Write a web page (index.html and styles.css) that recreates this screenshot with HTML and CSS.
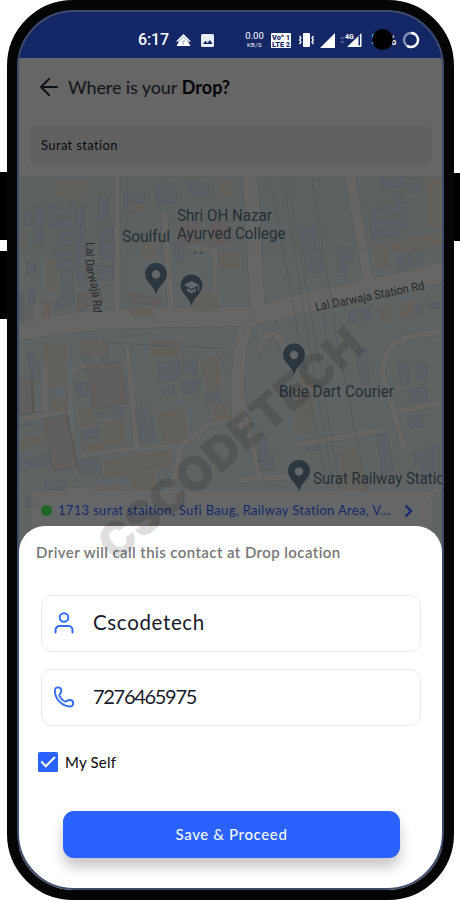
FILE: index.html
```html
<!DOCTYPE html>
<html lang="en">
<head>
<meta charset="utf-8">
<title>Drop location</title>
<link rel="stylesheet" href="styles.css">
</head>
<body>
<div class="stage">
<i class="key key-up"></i><i class="key key-down"></i><i class="key key-power"></i>
<main class="phone">
<header class="status">
  <span class="clock">6:17</span>
  <svg class="tri" width="15" height="12" viewBox="0 0 15 12"><path d="M7.500 0 15 7.500H12L14.500 12H.5L3 7.500H0Z" fill="#fff"/><path d="M2 8 7.500 3 13 8M7 11V7h2" fill="none" stroke="#8792b5" stroke-width=".9"/></svg>
  <svg class="photo" width="13" height="13" viewBox="0 0 13 13"><rect width="13" height="13" rx="1.500" fill="#e9ebf2"/><path d="m2 10 2.500-3.300 2 2.200L9 6l2.500 4Z" fill="#132766"/></svg>
  <span class="rate"><b>0.00</b><small>KB/S</small></span>
  <svg class="volte" width="20" height="15" viewBox="0 0 20 15"><rect width="20" height="15" rx="1" fill="#fff"/><text x="1" y="6.800" textLength="12" lengthAdjust="spacingAndGlyphs">Vo^</text><text x="15" y="6.800">1</text><text x="1" y="13.600" textLength="12" lengthAdjust="spacingAndGlyphs">LTE</text><text x="15" y="13.600">2</text></svg>
  <svg class="vibe" width="15" height="14" viewBox="0 0 15 14"><rect x="4" y="0" width="7" height="14" rx="1" fill="#fff"/><path d="m.5 3 1.500 2-1.500 2L2 9 .5 11M14.500 3 13 5l1.500 2L13 9l1.500 2" fill="none" stroke="#fff" stroke-width="1.300"/></svg>
  <svg class="sig" width="15" height="15" viewBox="0 0 15 15"><path d="M15 0v15H0Z" fill="#fff"/></svg>
  <svg class="sig2" width="22" height="16" viewBox="0 0 22 16"><path d="m0 7 2.300-3L4.500 7ZM0 9l2.300 3L4.500 9Z" fill="#53628e"/><path d="M21.500 1v14H7Z" fill="#fff"/><path d="M18.500 4v9.500h1.500V3Z" fill="#132766"/><path d="M5 0h10v5L12 7H5Z" fill="#132766"/><text x="5" y="6.500" class="g4">4G</text></svg>
  <span class="batt">58%<i></i></span>
  <svg class="ring" width="18" height="18" viewBox="0 0 18 18" fill="none" stroke-width="2.300"><circle cx="9" cy="9" r="7" stroke="#8793b5"/><path d="M9 2a7 7 0 1 1-4 12.700" stroke="#fff"/></svg>
</header>
<section class="top">
  <svg width="18" height="18" viewBox="0 0 18 18" fill="none" stroke="#0c0f18" stroke-width="1.900" stroke-linecap="round" stroke-linejoin="round"><path d="M17 9H1M9 1 1 9l8 8"/></svg>
  <h1><span class="lead">Where is your</span> <b>Drop?</b></h1>
</section>
<div class="search">Surat station</div>
<section class="mapbox">
<svg class="map" width="424" height="380" viewBox="19 176 424 380">
<rect x="19" y="176" width="424" height="380" fill="#5f6363"/>
<g class="roads" fill="none" stroke="#595c5d" stroke-linejoin="round">
 <path d="M117 175V318" stroke-width="7"/><path d="M164 212 172 318" stroke-width="8"/><path d="M250 175 258 315" stroke-width="16"/><path d="M350 175 370 290" stroke-width="11"/>
 <path d="M15 331 C100 316 150 318 255 316 C320 296 380 290 450 270" stroke-width="21"/>
 <path d="M255 315 C240 330 240 350 238 380 V430" stroke-width="14"/><path d="M260 351 C267 328 277 328 286 352" stroke-width="8"/>
 <path d="M127 345 132 394 137 448" stroke-width="7"/><path d="M45 365V414M19 418 75 412M72 450 70 380 Q70 367 86 366H126" stroke-width="7"/>
 <path d="M82 456C120 449 150 446 180 448C200 430 215 415 248 418M180 450 172 491M239 385 260 480" stroke-width="6"/>
 <path d="M448 332C403 334 385 340 382 372L405 450M392 413 443 402M295 445 382 430M240 480 310 475" stroke-width="7"/>
 <path d="M19 500C45 490 70 491 105 488M424 520C420 500 430 490 448 487M37 293V330M215 252C205 247 190 247 187 248M215 248V316" stroke-width="6"/>
</g>
<g fill="none" stroke="#656666" stroke-linejoin="round">
 <path d="M117 175V318" stroke-width="5.500"/><path d="M164 212 172 318" stroke-width="6.500"/><path d="M250 175 258 315" stroke-width="14"/><path d="M350 175 370 290" stroke-width="9.500"/>
 <path d="M15 331 C100 316 150 318 255 316 C320 296 380 290 450 270" stroke-width="19.500"/>
 <path d="M255 315 C240 330 240 350 238 380 V430" stroke-width="12.500"/><path d="M260 351 C267 328 277 328 286 352" stroke-width="6.500"/>
 <path d="M127 345 132 394 137 448" stroke-width="5.500"/><path d="M45 365V414M19 418 75 412M72 450 70 380 Q70 367 86 366H126" stroke-width="5.500"/>
 <path d="M82 456C120 449 150 446 180 448C200 430 215 415 248 418M180 450 172 491M239 385 260 480" stroke-width="5"/>
 <path d="M448 332C403 334 385 340 382 372L405 450M392 413 443 402M295 445 382 430M240 480 310 475" stroke-width="5.500"/>
 <path d="M19 500C45 490 70 491 105 488M424 520C420 500 430 490 448 487M37 293V330M215 252C205 247 190 247 187 248M215 248V316" stroke-width="5"/>
</g>
<g class="blocks">
<g fill="#5b5e63" stroke="#55585d" stroke-width=".6">
 <path d="M24 209h9v17h-9zM36 208h9v18h-9zM48 205h8v22h-8zM56 208h18v9H56zM56 219h18v9H56zM57 230h17v7H57zM58 238h16v8H58zM54 250h19v8H54zM56 260h18v11H56zM76 208h8v17h-8zM76 226h9v9h-9zM77 238h8v26h-8zM77 266h9v19h-9zM98 197h10v23H98zM99 228h14v12H99zM100 242h14v18h-14zM98 266h15v14H98zM71 198h6v8h-6zM34 230l9-1v15h-8zM27 262h9v12h-9zM61 272h12v33H61zM28 289h8v14h-8zM57 297h7v12h-7zM19 293h5v30h-5z"/>
 <path d="M124 193l21-1v18h-12v1h-9zM154 185l22-2 1 19-20 3zM186 180l23 4-1 14-18-3zM174 243l9-1 1 18-8 2zM380 178l25-2 1 10-26 3zM407 184l14-1 1 8-14 2zM394 196l8-1 1 8-8 1zM369 210l37-7 1 10-37 6zM370 223l37-7 1 10-37 7zM371 232l28-6 1 9-28 5zM299 228l18-4 6 48-16 2zM336 249l15-3 2 14-6 1v15l-8 1zM396 258l7-2 4 13-7 2zM406 254l5-2 4 13-6 1zM417 253l5-1 2 11-6 1zM349 312l8-3 1 13-8 2zM361 310l8-2 2 12-8 2zM415 305l8-1v9h-8zM430 303l14-2v8h-14zM322 317l3-1 2 16-2 1z"/>
 <path d="M74 382h13v13l-10 1zM157 363l22-3 1 18-21 3zM183 361l14-2v16h-14zM162 388l11-2 1 7-10 2zM181 383l18-4v13l-15 2zM205 394l14-3 1 12-15 1zM134 410l14-4 8 34-15 5zM111 409l12-2v11h-10zM96 413l7-1 1 4-7 1zM80 431l18-3 1 9-16 3zM27 353l6-1 2 11 4 1v17l-7-3zM82 346h9v14h-9zM102 340h6v20h-6zM19 460 50 454v10l-31 7zM45 480l21 1v9H45zM79 460l22-2v15H79zM25 497h15v11H26zM356 351l11-2 2 36h-8zM397 363l10-1 3 22-9 1zM415 365l10-3 3 16-9 2zM408 390l18-4 2 15-17 2zM408 417l14-2v12l-12 1zM377 435l10-2 7 38-12 3zM414 452l25-8v34l-18-2v-12l-7 1zM259 440l8-1v22h-8zM258 455l16-1-1 16h-13zM307 448l14-2v4l-13 1zM19 425l16-3v3l-15 1z"/>
</g>
<g fill="#636059" stroke="#6c6557" stroke-width=".6">
 <path d="M57 181h30v13l-7 1v5H67v-3H57zM47 259h8l2 30H46zM28 314h7v9h-7zM19 237h6v9h-6zM42 300h9v18h-9zM142 243h14v14h-14zM130 307h24v9h-24zM132 210h14v-5h-14zM218 181h13v16h-10zM192 294h26v18h-26zM218 252h22v17h-22zM374 245l14-1 1 23-14 1zM392 243 442 231v14l-48 7zM426 178h17v47h-16zM379 307l11-1 2 14-11 2zM400 304l14-2v15l-14 1z"/>
 <path d="M43 344h24v15H43zM47 360l17-2 2 26-18 1zM49 401l18-2v13H50zM78 409l16-1 2 17-16 2zM84 445l19-4v10l-21 2zM104 423l20-3 1 24-20 2zM102 461l68-12 2 17-66 13zM129 474l26-3 2 20h-24zM80 341h27v12H82zM151 340h28v17h-27zM198 362l21-5 4 31-15 4zM157 413l27-6 4 32-25 7zM212 407l15-5 6 18-16 1zM19 440l27-6-1 11-26 5zM298 378l12-3 4 20-3 36-12 2-4-1zM340 450l16-2 12 44h-26zM94 488l31-1v5H94z"/>
</g>
<g fill="#615e5c" stroke="#575352" stroke-width=".7"><path d="m87 366 34-4 6 41-34 7ZM43 420l23-6 12 53-25 4ZM19 379l12-1 4 35-16 3Z"/><path d="m67 414 10 53M32 379l1 34" stroke-width="2"/><path d="m78 295 22-4 3 10-25 9ZM129 294l31 4-1 7-30-2Z"/></g>
<path d="M181 222h20v22h-20zM210 222h18v23h-18z" fill="#675b5a"/>
</g>
<g fill="none" stroke="#565959" stroke-width=".8"><path d="M270 176 308 390 328 491M283 176 310 350 335 491M287 176 319 360 340 491M312 176 337 340 367 491"/><path d="m276 204 4-1m5 27 4-1m0 44 4-1m24-92 4-1m10 76 4-1m-17 133 4-1m20-1 4-1" stroke-width="1"/><path d="M242 334q6-12 16-18M103 343 220 348 227 360M260 360q0-20 10-20t12 20"/></g>
<g class="place">
 <text x="177" y="221" textLength="95" lengthAdjust="spacingAndGlyphs">Shri OH Nazar</text><text x="177" y="239" textLength="108.500" lengthAdjust="spacingAndGlyphs">Ayurved College</text><text x="122" y="241.500" textLength="48" lengthAdjust="spacingAndGlyphs">Soulful</text>
 <text x="279" y="397" textLength="115" lengthAdjust="spacingAndGlyphs">Blue Dart Courier</text><text x="313" y="483.500" textLength="140" lengthAdjust="spacingAndGlyphs">Surat Railway Station</text>
</g>
<g class="road"><text transform="translate(316 311) rotate(-11.300)" textLength="111" lengthAdjust="spacingAndGlyphs">Lal Darwaja Station Rd</text>
<path id="laneway" d="M86 242C86 260 85 268 89 280C93 292 93 304 94 317" fill="none"/><text class="lane"><textPath href="#laneway" textLength="72" lengthAdjust="spacingAndGlyphs">Lal Darwaja Rd</textPath></text></g>
<path d="M194 253h2m4 0h2" stroke="#20292e" stroke-width="1.200"/>
<defs><path id="pin" d="M0 21C-1.500 12-11 8-11 0A11 11 0 0 1 11 0C11 8 1.500 12 0 21Z"/></defs>
<g fill="#2b363e"><use href="#pin" x="156" y="274"/><use href="#pin" x="191.500" y="285.500"/><use href="#pin" x="294" y="354.500"/><use href="#pin" x="299" y="471"/></g>
<g fill="#646667"><circle cx="156" cy="274.500" r="4.200"/><circle cx="294" cy="355" r="4.200"/><circle cx="299" cy="471.500" r="4.200"/><path d="m184 285 7.500-4 7.500 4-7.500 4ZM187 288l4.500 2.500 4.500-2.500v3l-4.500 2.500-4.500-2.500ZM198 285h1v6h-1Z"/></g>
</svg>
<div class="address"><i></i><span>1713 surat staition, Sufi Baug, Railway Station Area, V...</span><svg width="9" height="14" viewBox="0 0 9 14"><path d="m1.500 1.500 5.500 5.500-5.500 5.500" fill="none" stroke="#12296e" stroke-width="2.300"/></svg></div>
</section>
<section class="sheet">
  <h2><span>Driver will call this contact at Drop location</span></h2>
  <div class="field"><svg width="20" height="22" viewBox="0 0 20 22" fill="none" stroke="#346bf5" stroke-width="2" stroke-linecap="round"><circle cx="10" cy="5.500" r="4.300"/><path d="M1.500 20.500v-2.500a4 4 0 0 1 4-4h9a4 4 0 0 1 4 4v2.500"/></svg><span class="name">Cscodetech</span></div>
  <div class="field"><svg width="20" height="22" viewBox="0 0 20 22" fill="none" stroke="#346bf5" stroke-width="1.900" stroke-linejoin="round"><path d="M4 1.400C2 1.400.8 2.900.9 5.200C1.300 13 7.500 19.600 15 20.400C17.800 20.700 19.200 19.300 19.200 17.200C19.200 15.200 17.800 14 15.800 14C12.800 14 12.700 16.200 11 15.500C9 14.500 6.400 11.800 5.500 9.800C5 8 7.200 7.800 7.200 4.800C7.200 2.800 6 1.400 4 1.400Z"/></svg><span class="tel">7276465975</span></div>
  <label class="self"><svg width="20" height="20" viewBox="0 0 20 20"><rect width="20" height="20" rx="1.500" fill="#2962ff"/><path d="m3.300 9.500 4.500 4.700L17 5" fill="none" stroke="#fff" stroke-width="2.100"/></svg><span>My Self</span></label>
  <button><span>Save &amp; Proceed</span></button>
</section>
</main>
<svg class="mark" width="460" height="900" viewBox="0 0 460 900"><text transform="translate(115 563) rotate(-40.200)" textLength="330" lengthAdjust="spacingAndGlyphs">CSCODETECH</text></svg>
</div>
</body>
</html>
```
FILE: styles.css
```css
* { box-sizing: border-box; }
body { margin: 0; background: #fff; font-family: Lato, sans-serif; }
.stage { position: relative; width: 460px; height: 900px; overflow: hidden; padding-left: 7px; }
.phone { position: relative; width: 447px; height: 900px; border: 10px solid #050505; border-radius: 66px; background: #050505; display: flex; flex-direction: column; overflow: hidden; }
.phone::after { content: ""; position: absolute; inset: 0; border: 2px solid #3c4d6c; border-radius: 57px; pointer-events: none; box-shadow: 0 0 0 12px #050505; }
.key { position: absolute; background: #000; width: 8px; }
.key-up { left: 0; top: 172px; height: 68px; }
.key-down { left: 0; top: 251px; height: 68px; }
.key-power { right: 0; top: 173px; height: 68px; }
.status { height: 48px; flex: none; background: #132766; color: #fff; font-family: Roboto, sans-serif; display: flex; align-items: center; padding: 12px 0 0 121px; }
.clock { font-size: 16px; line-height: 18px; font-weight: 500; width: 30px; letter-spacing: -.1px; margin-top: -1px; }
.tri { margin-left: 8px; }
.photo { margin-left: 10px; }
.rate { width: 19px; margin-left: 31px; text-align: center; display: flex; flex-direction: column; align-items: center; }
.rate b { font-size: 9.500px; line-height: 11px; font-weight: 400; margin-top: -2px; }
.rate small { font-size: 6px; line-height: 7px; letter-spacing: .4px; }
.volte { margin-left: 7px; }
.volte text { font: 900 6.800px Roboto, sans-serif; fill: #132766; }
.vibe { margin-left: 8px; }
.sig { margin-left: 6px; }
.sig2 { margin-left: 5px; }
.g4 { font: 700 7px Roboto, sans-serif; fill: #fff; }
.batt { position: relative; margin-left: 9px; width: 28px; font-size: 14px; font-weight: 500; letter-spacing: -.3px; }
.batt i { position: absolute; width: 21px; height: 21px; border-radius: 50%; background: #000; left: 1px; top: -3px; }
.ring { margin-left: 3px; }
.top { height: 68px; flex: none; background: #666; display: flex; align-items: center; padding: 0 0 11px 23px; gap: 10px; }
h1 { margin: 0; font-size: 18px; font-weight: 500; color: #161821; white-space: nowrap; }
.lead { letter-spacing: -.12px; }
h1 b { color: #030305; font-weight: 700; }
.search { flex: none; height: 50px; padding: 0 0 0 24px; line-height: 38px; font-size: 13px; color: #090b10; letter-spacing: .36px; background: #666; position: relative; z-index: 0; }
.search::before { content: ""; position: absolute; z-index: -1; inset: 0 12px 12px 13px; border-radius: 6px; background: #606060; }
.mapbox { flex: none; height: 350px; padding: 0 2px; position: relative; }
.map { display: block; }
.roads { opacity: .7; }
.blocks { opacity: .72; }
.place { font: 400 16px Roboto, sans-serif; fill: #232f37; }
.road { font: 400 12px Roboto, sans-serif; fill: #25292b; }
.lane { font-size: 12px; }
.address { position: absolute; left: 14px; right: 12px; top: 315px; height: 40px; background: rgba(102,102,102,.82); display: flex; padding: 0 0 0 10px; color: #12296e; font-size: 13px; line-height: 39px; white-space: nowrap; border-radius: 8px; align-items: flex-start; }
.address i { width: 11px; height: 11px; border-radius: 50%; background: #1e6726; margin: 14px 6px 0 0; }
.address span { width: 346px; letter-spacing: .33px; }
.address svg { margin-top: 13px; }
.sheet { flex: 1; background: #fff; border-radius: 26px 26px 0 0; padding: 0 22px; display: flex; flex-direction: column; margin: 0 2px; position: relative; }
h2 { margin: 0 0 0 -5px; height: 68.500px; padding-top: 15.500px; font-size: 15px; line-height: 20px; font-weight: 600; color: #777; white-space: nowrap; letter-spacing: .42px; }
.field { width: 380px; height: 57px; border: 1px solid #e8ebf2; border-radius: 11px; margin-bottom: 17px; display: flex; align-items: center; padding-left: 12px; color: #171a29; font-size: 20px; flex: none; }
.field svg { width: 20px; margin-right: 19px; }
.field span { margin-top: -2px; }
.name { font-size: 20.500px; letter-spacing: .65px; }
.tel { font-size: 20px; letter-spacing: -1.300px; }
.self { display: flex; align-items: center; height: 20px; margin: 9.500px 0 0 -3px; font-size: 15px; color: #050505; gap: 7px; letter-spacing: .2px; }
button { border: 0; width: 337px; height: 47px; margin: 38.500px 0 0 22px; border-radius: 11px; background: #2962ff; color: #f5f8ff; font: 500 15px Lato, sans-serif; letter-spacing: .62px; box-shadow: 0 9px 13px rgba(0,0,0,.22); padding: 0; }
.mark { position: absolute; left: 0; top: 0; pointer-events: none; }
.mark text { font: 900 47px Inter, sans-serif; fill: rgba(0,0,0,.13); }
```
